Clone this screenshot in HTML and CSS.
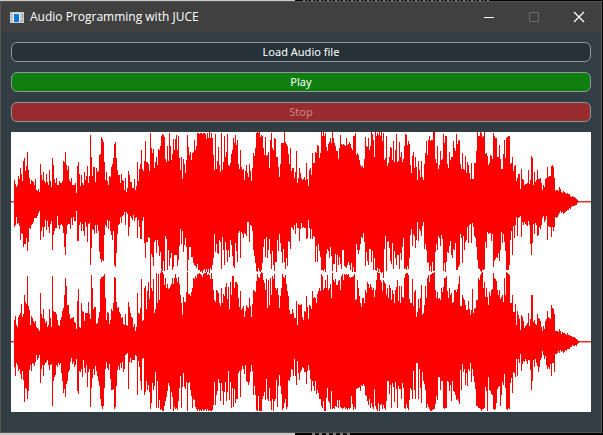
FILE: index.html
```html
<!DOCTYPE html>
<html lang="en">
<head>
<meta charset="utf-8">
<title>Audio Programming with JUCE</title>
<link rel="stylesheet" href="styles.css">
</head>
<body>
<div class="window">
  <header class="titlebar">
    <svg class="app-icon" viewBox="0 0 14 11" aria-hidden="true">
      <rect width="14" height="11" fill="#c9cdd0"/>
      <rect x="3" y="1" width="7" height="9" fill="#e8f2fa"/>
      <rect x="4" y="2" width="5" height="8" fill="#0878d8"/>
      <path d="M1 2h1v1h-1zM1 5h1v1h-1zM1 8h1v1h-1zM12 2h1v4h-1zM11 8h2v1h-2z" fill="#92989c"/>
    </svg>
    <h1 class="title">Audio Programming with JUCE</h1>
    <div class="controls">
      <button class="control" aria-label="Minimize"><svg viewBox="0 0 10 10"><path d="M0 5.5h10"/></svg></button>
      <button class="control" aria-label="Maximize" disabled><svg viewBox="0 0 10 10"><path d="M.5 .5h9v9h-9z"/></svg></button>
      <button class="control close" aria-label="Close"><svg viewBox="0 0 10 10"><path d="M0 0l10 10M10 0l-10 10"/></svg></button>
    </div>
  </header>
  <main class="content">
    <button class="action">Load Audio file</button>
    <button class="action play">Play</button>
    <button class="action stop" disabled>Stop</button>
    <svg class="waveform" viewBox="0 0 580 280" preserveAspectRatio="none" role="img" aria-label="Stereo waveform">
      <path class="axis" d="M0 69h580v1h-580zM0 209h580v1h-580z"/>
      <path class="axis soft" d="M0 70h580v1h-580zM0 210h580v1h-580z"/>
      <path class="wave" id="wave"/>
    </svg>
  </main>
</div>
<script src="waveform.js"></script>
</body>
</html>
```
FILE: styles.css
```css
* { box-sizing: border-box; }
body {
  margin: 0;
  min-height: 100vh;
  padding: 1px 1px 2px 0;
  display: flex;
  background:
    repeating-linear-gradient(90deg, #8a8070 0 2px, #111 2px 4px, #6d7f8c 4px 5px, #111 5px 8px) 303px 0 / 188px 1px no-repeat,
    repeating-linear-gradient(90deg, #777 0 3px, #111 3px 7px) 312px 100% / 38px 2px no-repeat,
    linear-gradient(90deg, #c8c8c8 295px, #000 295px);
}
.window {
  flex: 1;
  display: flex;
  flex-direction: column;
  border: 1px solid #555;
  background: #323e44;
}
.titlebar {
  display: flex;
  align-items: center;
  height: 30px;
  padding-left: 9px;
  background: #404040;
}
.app-icon { width: 14px; height: 11px; shape-rendering: crispEdges; }
.title {
  flex: 1;
  margin: 0 0 0 6px;
  font: 12px/16px "Open Sans", "Noto Sans", sans-serif;
  color: #fff;
}
.controls { display: flex; }
.control {
  width: 45px;
  height: 30px;
  padding: 0;
  border: 0;
  background: none;
  display: grid;
  place-items: center;
}
.control svg { width: 10px; height: 10px; fill: none; stroke: #fff; overflow: visible; }
.control:disabled svg { stroke: #6b6b6b; }
.close svg { stroke-width: 1.3; }
.content {
  flex: 1;
  display: flex;
  flex-direction: column;
  gap: 10px;
  padding: 10px 10px 20px;
}
.action {
  height: 20px;
  padding: 0;
  border: 1px solid #8e989b;
  border-radius: 6px;
  background: #263238;
  color: #fff;
  font: 11px/16px "Noto Sans", sans-serif;
}
.play { background: #0f800f; }
.stop { background: #982b2e; color: #cc8788; }
.waveform {
  display: block;
  flex: 1;
  width: 100%;
  min-height: 0;
  background: #fff;
  shape-rendering: crispEdges;
}
.wave, .axis { fill: #f00; }
.axis { fill: #d83030; }
.soft { fill: #f99; }
```
FILE: waveform.js
```js
// Peak rows are sampled in thirds of a unit; each segment starts at column x.
// base is the row offset of the drawing's top edge within that segment.
const segments = [
  { x: 3, base: 12,
    top: "157 167 177 170 145 153 121 137 158 98 90 130 115 72 126 150 168 157 158 163 170 153 186 189 184 193 109 141 155 132 158 165 138 163 171 126 160 178 91 111 153 165 151 171 171 160 165 165 158 98 103 72 111 126 114 156 162 151 171 171 170 166 195 114 102 139 173 142 165 170 132 157 145 115 165 145 22 87 145 117 117 162 121 133 130 81 79 27 32 43 102 157 132 160 172 145 147 118 109 90 48 43 90 127 141 141 165 139 157 160 187 150 192 180 130 141 162 162 180 180 152 187 175 102 160 124 109 66 124 130 100 40 102 103 108 130",
    bottom: "297 292 267 288 285 294 336 315 318 357 349 348 330 369 342 300 303 292 288 282 270 270 269 264 255 250 337 309 298 328 298 276 306 280 298 315 288 280 366 321 310 300 300 264 291 303 291 288 294 315 357 382 318 292 288 288 304 270 291 268 280 279 249 340 340 291 283 310 288 310 325 283 297 343 289 285 411 360 304 306 318 291 315 292 310 372 393 401 396 398 322 291 298 276 303 280 309 321 337 309 411 417 375 318 292 288 267 285 264 262 253 292 252 258 325 297 264 270 276 262 280 270 267 330 276 297 333 333 279 267 346 390 342 343 327 330" },
  { x: 139, base: 12,
    top: "15 60 75 64 120 102 87 112 63 66 54 24 18 22 27 93 103 54 99 15 54 96 78 33 66 34 22 66 24 90 127 87 152 94 108 135 97 22 58 82 72 96 75 72 36 66 54 15 14 18 14 14 18 14 14 18 33 14 30 12 30 15 30 82 126 18 122 100 58 112 132 15 127 102 24 87 72 18 110 114 105 78 66 30 45 22 52 36 109 124 66 118 126 124 157 130 111 134 148 108 129 158 121 75 85 60 14 12 14 12 27 22 24 60 82 27 85 82 72 121 36 14 60 66 30 32 88 88 118 147 109 46 46 45 12 42 48 54 78 108 60 130 121 120 151 132 69 165 150 120",
    bottom: "430 378 388 415 342 337 375 337 354 385 372 424 430 398 430 325 333 427 366 415 390 375 427 418 382 382 382 415 396 354 303 348 309 372 352 330 358 430 396 358 358 387 387 405 411 415 420 408 427 427 433 430 436 427 424 433 424 432 424 435 421 427 411 390 318 373 348 375 378 337 342 423 327 366 412 342 366 402 366 387 337 351 384 414 421 346 370 402 315 309 391 313 318 330 315 318 325 283 282 342 291 294 309 366 384 405 430 433 420 430 432 427 406 357 333 388 327 390 367 333 378 423 370 411 430 402 402 337 370 318 345 373 406 363 403 423 390 415 340 342 364 297 301 306 291 318 285 300 300 340" },
  { x: 289, base: 12,
    top: "134 150 156 153 147 156 105 153 175 126 121 142 75 105 105 72 75 51 54 91 75 12 24 12 24 14 58 69 48 42 30 45 12 30 46 54 69 69 93 60 21 48 51 48 51 54 30 51 48 42 48 60 66 24 24 15 80 74 82 97 110 118 114 121 94 27 54 57 30 66 54 12 18 36 87 12 24 15 22 12 24 12 39 14 97 90 24 115 106 87 58 60 96 39 102 66 18 102 100 42 87 72 102 93 54 18 22 51 39 48 112 136 84 72 121 87 118 157 100 126 147 100 148 157 108 75 39 81 36 24 39 36 36 12 12 94 105 54 124 112 70 97 94 18 45 24 24 108 121 72",
    bottom: "303 285 300 297 301 300 333 330 276 300 334 303 333 325 328 402 354 402 348 370 387 427 427 430 423 433 378 363 370 391 358 385 430 408 408 378 433 382 411 388 409 423 366 366 415 418 420 412 402 412 427 405 433 418 433 433 348 367 378 366 348 327 330 315 342 415 373 400 411 363 363 403 369 427 390 427 430 420 432 423 433 436 433 450 363 325 430 342 339 360 400 408 345 423 369 390 411 381 381 423 375 396 358 330 423 420 427 414 424 391 321 303 354 318 325 360 337 282 339 303 310 325 294 282 363 348 366 406 402 430 415 432 402 430 430 373 348 366 324 330 354 321 333 430 406 433 402 373 375 354" },
  { x: 439, base: 12,
    top: "96 88 88 39 60 69 18 48 39 36 108 124 75 124 126 84 136 102 112 136 154 105 153 153 106 106 70 12 24 24 12 14 27 24 12 78 76 85 111 105 82 85 92 15 24 30 30 88 88 52 94 123 123 78 36 90 30 27 25 24 109 105 87 130 114 112 160 150 138 139 183 124 153 156 172 168 168 166 126 168 157 85 90 171 133 163 157 127 153 153 150 165 186 171 178 153 150 118 148 145 145 115 112 117 150 189 187 187 190 178 184 192 195 190 193 195 199 195 199 199 204 207 204 207 208 210 212 215 218",
    bottom: "340 381 391 363 367 346 427 427 418 412 318 330 405 325 367 342 337 297 346 291 288 345 285 298 324 330 358 396 420 424 430 432 427 427 423 342 360 312 318 315 315 340 318 418 400 393 388 390 376 400 366 312 345 318 342 370 427 427 427 411 337 309 381 294 330 291 267 324 270 267 264 327 282 291 282 288 291 294 280 292 348 381 345 288 318 285 291 324 321 297 303 291 270 265 283 276 264 337 294 297 297 327 297 310 297 268 270 267 261 256 250 255 252 258 255 252 250 246 246 240 243 237 235 234 235 232 230 225 222" },
  { x: 3, base: -402,
    top: "162 150 177 183 153 147 141 115 153 145 88 108 115 30 120 132 178 150 156 165 171 165 183 187 190 195 82 144 156 129 160 171 165 183 177 130 157 183 31 136 139 138 145 162 178 180 163 153 135 126 88 36 60 118 118 145 159 156 156 153 168 171 190 106 69 183 186 111 136 139 165 141 142 142 108 145 159 27 67 130 124 124 174 171 157 139 40 33 33 30 24 97 162 138 141 174 162 130 136 111 33 36 108 126 123 139 145 156 153 175 178 144 177 180 108 124 142 153 157 184 174 196 184 82 141 145 126 40 166 163 66 60 130 75 48 100 15 66 76 40 142 130 22 111 24 102 20 12 18 24 58 36 66 54 69 66 60 54 36 54 36 24 36 48 33 54 88 112 147 94 108 108 78 18 85 84 90 78 66 36 40 30 36 24 24 22",
    bottom: "303 330 291 297 315 309 325 340 315 343 409 366 370 399 376 312 297 315 292 294 300 288 268 283 276 267 352 309 298 330 298 291 288 283 297 312 297 294 420 345 334 328 297 303 291 297 291 321 345 382 370 392 354 346 318 312 288 276 294 288 304 297 280 376 384 315 318 309 333 283 306 322 297 363 318 310 423 366 337 310 327 300 315 331 346 360 400 421 430 421 366 310 288 306 313 294 339 373 373 370 428 423 360 312 300 313 291 306 288 318 309 267 265 262 370 288 276 292 283 283 283 267 270 388 285 304 346 373 280 276 387 378 346 373 357 378 430 412 351 373 360 318 427 345 427 402 433 430 436 436 420 406 393 375 351 360 430 378 393 436 424 430 427 433 405 366 331 427 363 321 363 370 348 436 352 348 372 390 427 400 402 424 430 436 430 436" },
  { x: 189, base: -402,
    top: "24 27 33 24 22 22 18 27 24 27 40 22 40 72 102 108 72 76 82 112 121 66 112 85 90 64 52 99 64 130 48 88 30 30 66 48 48 54 96 124 76 133 127 121 154 136 118 124 127 97 121 153 115 72 76 78 45 24 33 36 24 18 22 42 52 73 40 127 42 118 36 88 30 40 24 66 73 66 88 127 90 66 24 33 36 27 54 76 90 133 144 145 130 142 157 157 105 177 115 118 118 115 153 163 136 138 91 123 160 117 120 130 76 97 93 97 112 85 76 66 76 24 30 73 66 42 66 27 72 66 54 97 22 42 48 40 58 57 45 42 72 30 24 42 24 28 24 27 24 33 36 33 33 30 24 103 100 42 66 90 112 124 96 97 112 72 82 48 54 66 54 64 72 66 93 72 42 18 22 22 42 48 75 42 48 54 88 66 96 58 66 102 72 84 112 72 64 42 105 60",
    bottom: "432 436 430 436 432 430 436 430 436 433 436 436 433 418 348 418 387 375 340 351 406 351 376 418 378 348 406 378 315 403 348 427 366 424 370 412 400 400 322 315 394 312 300 310 325 298 345 348 357 348 318 298 316 388 360 388 433 436 390 436 436 436 400 390 378 403 339 400 405 367 405 433 400 436 405 400 343 424 360 328 360 385 432 427 412 400 430 424 342 345 333 309 312 331 280 330 357 285 321 342 318 312 303 306 318 318 354 315 297 312 340 376 346 360 376 346 385 373 382 400 400 420 427 405 436 436 397 367 406 412 430 376 430 427 430 420 424 403 427 403 424 427 430 427 424 430 427 432 427 430 427 390 415 432 423 430 369 367 367 363 376 358 360 354 360 388 390 406 418 400 427 412 424 430 370 420 430 436 412 436 418 415 430 418 427 433 405 346 345 385 358 427 352 363 409 348 370 427 360 370" },
  { x: 389, base: -402,
    top: "112 60 94 97 36 24 22 22 27 100 112 112 40 120 78 72 154 138 100 126 96 57 147 142 118 60 97 36 27 48 27 24 22 22 18 72 97 78 100 96 102 66 78 64 36 36 30 76 96 66 88 82 112 108 73 73 78 70 54 30 121 120 87 97 103 118 133 133 106 130 148 133 70 142 130 127 102 102 36 42 27 22 18 66 48 94 66 94 118 78 90 72 70 22 36 40 45 72 88 72 100 94 88 108 36 88 18 22 24 27 112 112 88 139 138 115 178 136 148 159 192 148 153 166 187 180 177 171 142 180 160 87 87 168 163 175 177 145 156 160 165 183 195 180 190 165 159 136 153 156 160 118 126 130 145 195 196 196 198 190 196 204 199 201 201 204 207 202 208 207 211 210 213 214 213 216 220 223 226",
    bottom: "369 400 352 367 427 430 415 427 432 403 366 372 400 315 373 400 292 292 400 310 367 412 318 345 354 372 427 415 424 430 436 436 433 430 430 415 390 403 334 333 373 346 346 427 430 427 427 346 348 375 357 405 345 376 378 388 402 400 406 415 312 373 294 318 310 358 321 360 309 315 291 348 309 331 348 370 421 421 427 427 430 436 430 430 427 363 376 436 333 372 376 385 388 430 433 430 412 370 363 360 420 388 348 358 325 367 430 432 427 430 351 336 382 318 321 334 280 330 280 292 264 316 294 285 288 280 285 294 283 282 313 372 345 283 303 280 291 300 318 304 283 277 256 267 280 270 297 309 304 309 294 330 292 292 318 265 265 262 256 261 253 258 256 262 258 252 256 250 249 249 243 243 238 240 241 238 240 235 232" }
];

let path = "";
for (const { x, base, top, bottom } of segments) {
  const lows = bottom.split(" ").map(Number);
  top.split(" ").map(Number).forEach((high, i) => {
    const low = lows[Math.min(i, lows.length - 1)];
    const y0 = Math.round((high - base) / 3);
    const y1 = Math.round((low - base) / 3);
    path += `M${x + i} ${y0}h1V${y1}h-1z`;
  });
}
document.getElementById("wave").setAttribute("d", path);
```
